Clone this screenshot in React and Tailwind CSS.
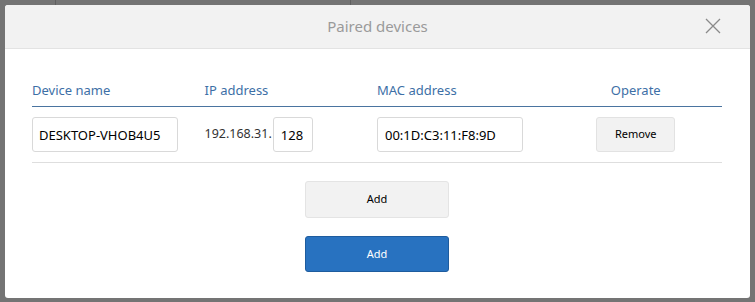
import React from "react";

const font = { fontFamily: '"Noto Sans", "Open Sans", sans-serif' };

function CloseIcon() {
  return (
    <svg width="16" height="16" viewBox="0 0 16 16" fill="none" stroke="#8a8a8a" strokeWidth="1.3">
      <path d="M1 1 L15 15 M15 1 L1 15" />
    </svg>
  );
}

const devices = [
  { name: "DESKTOP-VHOB4U5", ipPrefix: "192.168.31.", ipLast: "128", mac: "00:1D:C3:11:F8:9D" },
];

export default function App() {
  return (
    <div className="relative w-[755px] h-[302px] bg-[#747474] overflow-hidden p-[5px]" style={font}>
      {/* dimmed page behind the dialog */}
      <div className="absolute left-[55px] top-0 w-px h-[5px] bg-[#5f5f5f]" />
      <div className="absolute left-[350px] top-0 w-px h-[5px] bg-[#5f5f5f]" />

      <div className="relative w-[745px] h-[293px] bg-white rounded-[3px] overflow-hidden">
        <div className="relative h-[44px] bg-[#f2f2f2] border-b border-[#e3e3e3] flex items-center justify-center">
          <span className="text-[15px] text-[#9a9a9a]">Paired devices</span>
          <button className="absolute right-[29px] top-[13px]">
            <CloseIcon />
          </button>
        </div>

        <div className="pl-[27px] pr-[28px] pt-[27px]">
          <div className="grid grid-cols-4 h-[31px] items-center border-b border-[#4a74a0] text-[13px] text-[#3d6fa6]">
            <div>Device name</div>
            <div>IP address</div>
            <div>MAC address</div>
            <div className="text-center">Operate</div>
          </div>

          {devices.map((d) => (
            <div key={d.mac} className="grid grid-cols-4 items-center py-[10px] border-b border-[#dedede] text-[13px] text-black">
              <div>
                <input
                  readOnly
                  value={d.name}
                  className="w-[146px] h-[35px] border border-[#d9d9d9] rounded-[3px] px-[6px] outline-none"
                />
              </div>
              <div className="flex items-center gap-[1px] text-[#333]">
                <span className="text-[12.5px]">{d.ipPrefix}</span>
                <input
                  readOnly
                  value={d.ipLast}
                  className="w-[40px] h-[35px] border border-[#d9d9d9] rounded-[3px] px-[7px] outline-none text-black"
                />
              </div>
              <div>
                <input
                  readOnly
                  value={d.mac}
                  className="w-[146px] h-[35px] border border-[#d9d9d9] rounded-[3px] px-[7px] outline-none"
                />
              </div>
              <div className="flex justify-center">
                <button className="w-[79px] h-[35px] bg-[#f2f2f2] border border-[#e2e2e2] rounded-[3px] text-[11px] text-black">
                  Remove
                </button>
              </div>
            </div>
          ))}

          <div className="flex flex-col items-center">
            <button className="mt-[18px] w-[144px] h-[37px] bg-[#f2f2f2] border border-[#e4e4e4] rounded-[3px] text-[11px] text-black">
              Add
            </button>
            <button className="mt-[18px] w-[144px] h-[36px] bg-[#2872c0] border border-[#1e5c9e] rounded-[3px] text-[11px] text-white">
              Add
            </button>
          </div>
        </div>
      </div>
    </div>
  );
}
